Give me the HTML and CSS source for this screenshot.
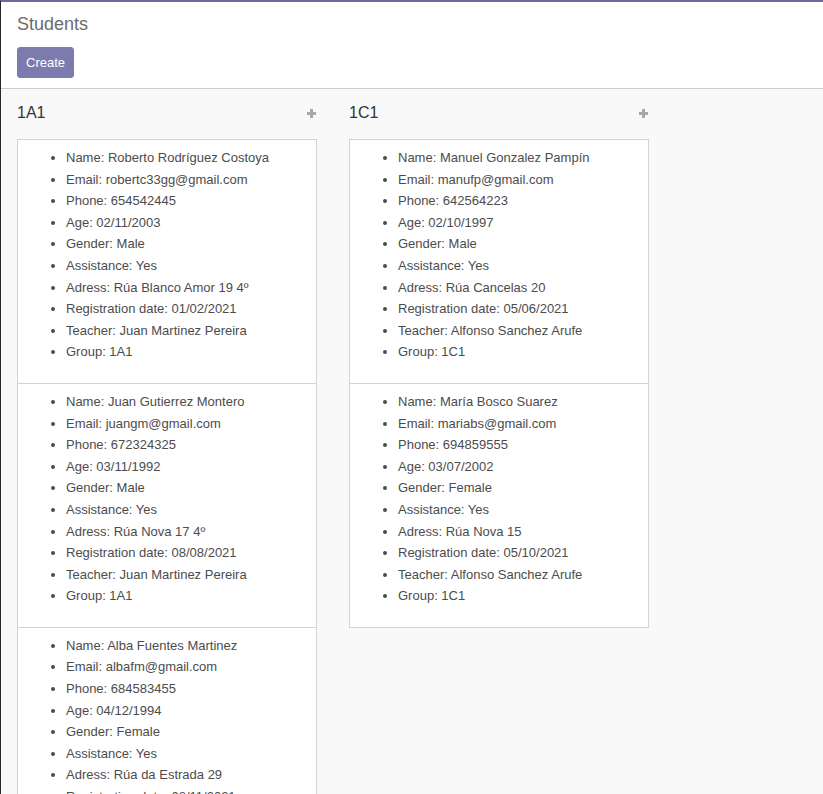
FILE: index.html
```html
<!DOCTYPE html>
<html>
<head>
<meta charset="utf-8">
<link rel="stylesheet" href="styles.css">
</head>
<body>
<div class="app">
  <div class="control-panel">
    <div class="title">Students</div>
    <button class="btn-create">Create</button>
  </div>
  <div class="kanban">
    <div class="column">
      <div class="col-header"><span class="col-title">1A1</span><span class="plus"></span></div>
      <div class="cards">
        <div class="card"><ul>
          <li>Name: Roberto Rodríguez Costoya</li>
          <li>Email: robertc33gg@gmail.com</li>
          <li>Phone: 654542445</li>
          <li>Age: 02/11/2003</li>
          <li>Gender: Male</li>
          <li>Assistance: Yes</li>
          <li>Adress: Rúa Blanco Amor 19 4º</li>
          <li>Registration date: 01/02/2021</li>
          <li>Teacher: Juan Martinez Pereira</li>
          <li>Group: 1A1</li>
        </ul></div>
        <div class="card"><ul>
          <li>Name: Juan Gutierrez Montero</li>
          <li>Email: juangm@gmail.com</li>
          <li>Phone: 672324325</li>
          <li>Age: 03/11/1992</li>
          <li>Gender: Male</li>
          <li>Assistance: Yes</li>
          <li>Adress: Rúa Nova 17 4º</li>
          <li>Registration date: 08/08/2021</li>
          <li>Teacher: Juan Martinez Pereira</li>
          <li>Group: 1A1</li>
        </ul></div>
        <div class="card"><ul>
          <li>Name: Alba Fuentes Martinez</li>
          <li>Email: albafm@gmail.com</li>
          <li>Phone: 684583455</li>
          <li>Age: 04/12/1994</li>
          <li>Gender: Female</li>
          <li>Assistance: Yes</li>
          <li>Adress: Rúa da Estrada 29</li>
          <li>Registration date: 08/11/2021</li>
          <li>Teacher: Juan Martinez Pereira</li>
          <li>Group: 1A1</li>
        </ul></div>
      </div>
    </div>
    <div class="column">
      <div class="col-header"><span class="col-title">1C1</span><span class="plus"></span></div>
      <div class="cards">
        <div class="card"><ul>
          <li>Name: Manuel Gonzalez Pampín</li>
          <li>Email: manufp@gmail.com</li>
          <li>Phone: 642564223</li>
          <li>Age: 02/10/1997</li>
          <li>Gender: Male</li>
          <li>Assistance: Yes</li>
          <li>Adress: Rúa Cancelas 20</li>
          <li>Registration date: 05/06/2021</li>
          <li>Teacher: Alfonso Sanchez Arufe</li>
          <li>Group: 1C1</li>
        </ul></div>
        <div class="card"><ul>
          <li>Name: María Bosco Suarez</li>
          <li>Email: mariabs@gmail.com</li>
          <li>Phone: 694859555</li>
          <li>Age: 03/07/2002</li>
          <li>Gender: Female</li>
          <li>Assistance: Yes</li>
          <li>Adress: Rúa Nova 15</li>
          <li>Registration date: 05/10/2021</li>
          <li>Teacher: Alfonso Sanchez Arufe</li>
          <li>Group: 1C1</li>
        </ul></div>
      </div>
    </div>
  </div>
</div>
</body>
</html>
```
FILE: styles.css
```css
html, body {
  margin: 0;
  padding: 0;
  height: 100%;
}
body {
  font-family: "Liberation Sans", Arial, sans-serif;
  font-size: 13px;
  color: #4c4c4c;
  background: #f9f9f9;
  overflow: hidden;
}
.app {
  border-top: 2px solid #6e6a9b;
  border-left: 1px solid #2d2230;
  min-height: 100%;
  box-sizing: border-box;
}
.control-panel {
  background: #fff;
  border-bottom: 1px solid #ccc;
  padding: 11px 16px 10px;
  height: 65px;
}
.title {
  font-size: 18px;
  color: #6c6c6c;
  line-height: 22px;
}
.btn-create {
  margin-top: 12px;
  background: #7c7bad;
  color: #fff;
  border: 1px solid #7c7bad;
  border-radius: 3px;
  font-family: "Liberation Sans", Arial, sans-serif;
  font-size: 13px;
  height: 31px;
  padding: 0 8px;
  cursor: pointer;
}
.kanban {
  display: flex;
  gap: 32px;
  padding: 0 16px;
}
.column {
  width: 300px;
  flex: none;
}
.col-header {
  display: flex;
  align-items: center;
  justify-content: space-between;
  height: 44px;
  padding-top: 2px;
  margin-bottom: 4px;
}
.col-title {
  font-size: 16px;
  color: #333;
}
.plus {
  position: relative;
  width: 9px;
  height: 9px;
  margin-right: 1px;
  margin-top: 1px;
}
.plus::before, .plus::after {
  content: "";
  position: absolute;
  background: #a8a8a8;
}
.plus::before {
  left: 3px;
  top: 0;
  width: 3px;
  height: 9px;
}
.plus::after {
  top: 3px;
  left: 0;
  width: 9px;
  height: 3px;
}
.card {
  background: #fff;
  border: 1px solid #ced4da;
  padding: 7px 8px 8px;
  margin-bottom: -1px;
}
.card ul {
  margin: 0 0 12px;
  padding-left: 40px;
}
.card li {
  line-height: 21.6px;
}
```
